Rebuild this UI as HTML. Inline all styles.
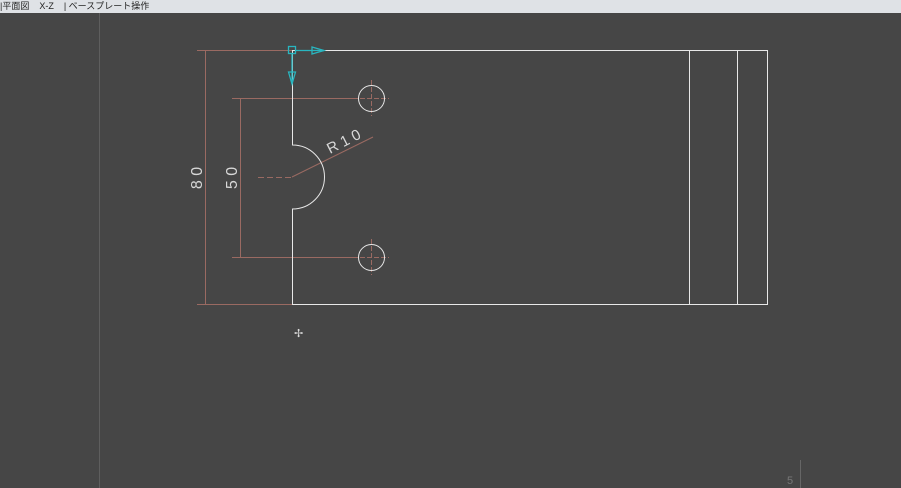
<!DOCTYPE html>
<html><head><style>
html,body{margin:0;padding:0;width:901px;height:488px;overflow:hidden;background:#464646;}
.top{position:absolute;left:0;top:0;width:901px;height:13px;background:#dfe2e6;font:9px "Liberation Sans","Noto Sans CJK JP",sans-serif;color:#222;line-height:13px;white-space:pre;}
</style></head><body>
<div class="top">|平面図    X-Z    | ベースプレート操作</div>
<svg width="901" height="488" style="position:absolute;left:0;top:0" font-family="Liberation Sans, sans-serif">
<line x1="99.5" y1="13" x2="99.5" y2="488" stroke="#5e5e5e"/>
<line x1="800.5" y1="460" x2="800.5" y2="488" stroke="#666"/>
<text x="787" y="484" fill="#777" font-size="11">5</text>
<g stroke="#9a6a62" stroke-width="1" fill="none">
<line x1="197" y1="50.5" x2="292" y2="50.5"/>
<line x1="197" y1="304.5" x2="292" y2="304.5"/>
<line x1="205.5" y1="50" x2="205.5" y2="304"/>
<line x1="232" y1="98.5" x2="358" y2="98.5"/>
<line x1="232" y1="257.5" x2="358" y2="257.5"/>
<line x1="240.5" y1="98" x2="240.5" y2="257"/>
<line x1="292" y1="177" x2="373" y2="137"/>
<line x1="258" y1="177.5" x2="292" y2="177.5" stroke-dasharray="6,3"/>
<line x1="371.5" y1="80" x2="371.5" y2="116" stroke-dasharray="5,2"/>
<line x1="353" y1="98.5" x2="389" y2="98.5" stroke-dasharray="5,2"/>
<line x1="371.5" y1="239" x2="371.5" y2="275" stroke-dasharray="5,2"/>
<line x1="353" y1="257.5" x2="389" y2="257.5" stroke-dasharray="5,2"/>
</g>
<g stroke="#e8e8e8" stroke-width="1" fill="none">
<path d="M292.5 50.5 H767.5 V304.5 H292.5 V209 A32 32 0 0 0 292.5 145 Z"/>
<line x1="689.5" y1="50" x2="689.5" y2="304"/>
<line x1="737.5" y1="50" x2="737.5" y2="304"/>
<circle cx="371.5" cy="98.5" r="13"/>
<circle cx="371.5" cy="257.5" r="13"/>
</g>
<g fill="#d8d8d8" font-size="16">
<text transform="translate(202,178) rotate(-90)" text-anchor="middle">8 0</text>
<text transform="translate(237,178) rotate(-90)" text-anchor="middle">5 0</text>
<text transform="translate(330,154) rotate(-27)" font-size="15">R 1 0</text>
</g>
<g stroke="#29b6c0" fill="none" stroke-width="1.3">
<rect x="288.5" y="46.5" width="7" height="7"/>
<line x1="296" y1="50.5" x2="324" y2="50.5"/>
<path d="M312 47 L324 50.5 L312 54 Z"/>
<line x1="292" y1="54" x2="292" y2="84"/>
<path d="M288.5 72 L292 84 L295.5 72 Z"/>
</g>
<text x="294" y="337" fill="#ddd" font-size="11">✢</text>
</svg>
</body></html>
